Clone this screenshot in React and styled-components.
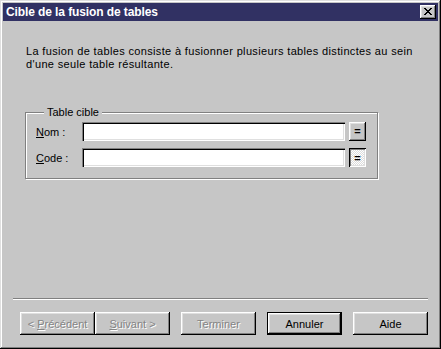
import React from 'react';
import styled, { createGlobalStyle } from 'styled-components';

const GlobalStyle = createGlobalStyle`
	html, body {
		margin: 0;
		padding: 0;
		background: #c6c6c6;
	}
	* {
		box-sizing: border-box;
	}
`;

const Window = styled.div`
	width: 441px;
	height: 349px;
	padding: 3px;
	display: flex;
	flex-direction: column;
	background: #c6c6c6;
	font-family: 'Liberation Sans', Arial, sans-serif;
	font-size: 11px;
	color: #000;
	box-shadow: inset -1px -1px #000, inset 1px 1px #dfdfdf, inset -2px -2px #808080,
		inset 2px 2px #fff;
`;

const TitleBar = styled.div`
	height: 18px;
	display: flex;
	align-items: center;
	justify-content: space-between;
	padding: 0 2px 0 3px;
	background: #313163;
`;

const Title = styled.span`
	color: #fff;
	font-weight: bold;
	font-size: 12px;
	letter-spacing: -0.1px;
`;

const CloseButton = styled.button`
	width: 16px;
	height: 14px;
	padding: 0;
	border: none;
	display: flex;
	align-items: center;
	justify-content: center;
	background: #c6c6c6;
	box-shadow: inset -1px -1px #000, inset 1px 1px #fff, inset -2px -2px #808080,
		inset 2px 2px #dfdfdf;
	& svg {
		margin: -1px 0 0 -1px;
	}
`;

const Description = styled.p`
	margin: 24px 0 0 23px;
	line-height: 13px;
	letter-spacing: 0.35px;
`;

const GroupBox = styled.fieldset`
	margin: 35px 0 0 22px;
	width: 353px;
	padding: 3px 11px 11px 10px;
	border: 1px solid #808080;
	box-shadow: inset 1px 1px #fff, 1px 1px #fff;
	display: flex;
	flex-direction: column;
	gap: 7px;
`;

const Legend = styled.legend`
	margin-left: 8px;
	padding: 0 3px;
	line-height: 13px;
	background: #c6c6c6;
`;

const Row = styled.div`
	display: flex;
	align-items: center;
`;

const Label = styled.label`
	width: 46px;
	flex-shrink: 0;
`;

const Input = styled.input`
	width: 263px;
	height: 19px;
	border: none;
	padding: 2px 4px;
	background: #fff;
	font: inherit;
	box-shadow: inset 1px 1px #808080, inset 2px 2px #000, inset -1px -1px #fff,
		inset -2px -2px #dfdfdf;
	outline: none;
`;

const EqualButton = styled.button`
	width: 17px;
	height: 19px;
	margin-left: 4px;
	padding: 0;
	border: none;
	font-family: 'Liberation Sans', Arial, sans-serif;
	font-size: 11px;
	font-weight: bold;
	line-height: 17px;
	color: #000;
	background: ${({ $pressed }) =>
		$pressed ? 'repeating-conic-gradient(#fff 0 25%, #dcdcdc 0 50%) 0 0 / 2px 2px' : '#c6c6c6'};
	box-shadow: ${({ $pressed }) =>
		$pressed
			? 'inset 1px 1px #000, inset -1px -1px #fff, inset 2px 2px #808080, inset -2px -2px #dfdfdf'
			: 'inset -1px -1px #000, inset 1px 1px #fff, inset -2px -2px #808080, inset 2px 2px #dfdfdf'};
	padding-top: ${({ $pressed }) => ($pressed ? '2px' : '0')};
`;

const Spacer = styled.div`
	flex: 1;
`;

const Separator = styled.div`
	margin: 0 10px 0 10px;
	height: 2px;
	border-top: 1px solid #808080;
	border-bottom: 1px solid #fff;
`;

const ButtonRow = styled.div`
	display: flex;
	justify-content: flex-end;
	padding: 12px 10px 11px 0;
`;

const DialogButton = styled.button`
	width: 75px;
	height: 23px;
	margin-left: ${({ $joined }) => ($joined ? '0' : '11px')};
	padding: 0;
	border: none;
	font-family: 'Liberation Sans', Arial, sans-serif;
	font-size: 11px;
	font-weight: normal;
	background: #c6c6c6;
	color: ${({ disabled }) => (disabled ? '#848484' : '#000')};
	text-shadow: ${({ disabled }) => (disabled ? '1px 1px #fff' : 'none')};
	box-shadow: ${({ $default }) =>
		$default
			? 'inset 0 0 0 1px #000, inset -2px -2px #000, inset 2px 2px #fff, inset -3px -3px #808080, inset 3px 3px #dfdfdf'
			: 'inset -1px -1px #000, inset 1px 1px #fff, inset -2px -2px #808080, inset 2px 2px #dfdfdf'};
`;

const CloseIcon = () => (
	<svg width="8" height="7" viewBox="0 0 8 7" shapeRendering="crispEdges">
		<path
			d="M0 0h2v1h-2zM6 0h2v1h-2zM1 1h2v1h-2zM5 1h2v1h-2zM2 2h4v1h-4zM3 3h2v1h-2zM2 4h4v1h-4zM1 5h2v1h-2zM5 5h2v1h-2zM0 6h2v1h-2zM6 6h2v1h-2z"
			fill="#000"
		/>
	</svg>
);

const App = () => (
	<>
		<GlobalStyle />
		<Window>
			<TitleBar>
				<Title>Cible de la fusion de tables</Title>
				<CloseButton>
					<CloseIcon />
				</CloseButton>
			</TitleBar>

			<Description>
				La fusion de tables consiste à fusionner plusieurs tables distinctes au sein
				<br />
				d'une seule table résultante.
			</Description>

			<GroupBox>
				<Legend>Table cible</Legend>
				<Row>
					<Label>
						<u>N</u>om :
					</Label>
					<Input />
					<EqualButton>=</EqualButton>
				</Row>
				<Row>
					<Label>
						<u>C</u>ode :
					</Label>
					<Input />
					<EqualButton $pressed>=</EqualButton>
				</Row>
			</GroupBox>

			<Spacer />
			<Separator />

			<ButtonRow>
				<DialogButton disabled $joined>
					&lt; <u>P</u>récédent
				</DialogButton>
				<DialogButton disabled $joined>
					<u>S</u>uivant &gt;
				</DialogButton>
				<DialogButton disabled>Terminer</DialogButton>
				<DialogButton $default>Annuler</DialogButton>
				<DialogButton>Aide</DialogButton>
			</ButtonRow>
		</Window>
	</>
);

export default App;
